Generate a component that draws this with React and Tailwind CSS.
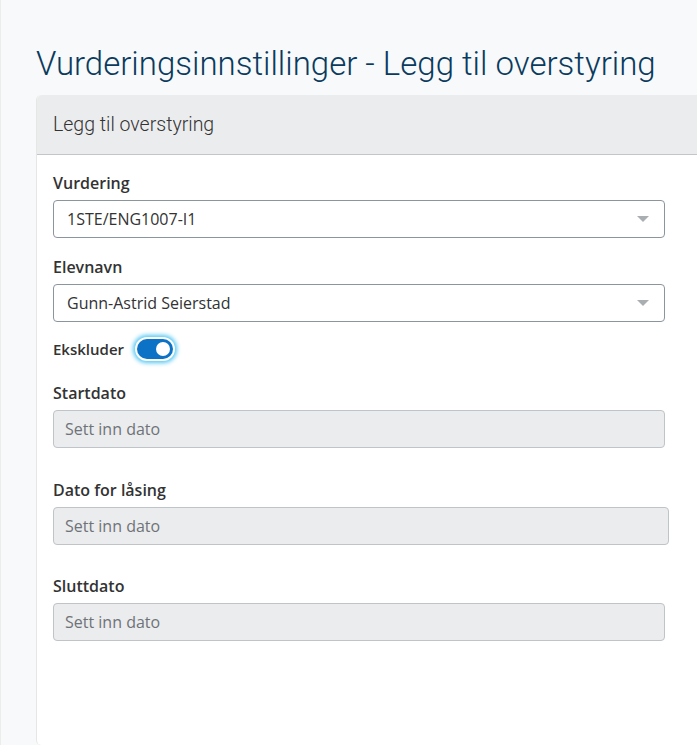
const labelCls = "block text-[16px] leading-[24px] font-semibold text-[#333] mb-[5px]";

function Select({ value }) {
  return (
    <div className="flex items-center justify-between h-[38px] w-[612px] rounded-[4px] border border-[#8a959e] bg-white pl-[13px] pr-[15px]">
      <span className="text-[16px] text-[#333]">{value}</span>
      <svg width="12" height="7" viewBox="0 0 12 7">
        <path d="M0 0h12L6 6z" fill="#a9aeb2" />
      </svg>
    </div>
  );
}

function DateInput({ wide }) {
  return (
    <div className={`flex items-center h-[38px] ${wide ? "w-[616px]" : "w-[612px]"} rounded-[4px] border border-[#bfc4c8] bg-[#ebecee] px-[11px]`}>
      <span className="text-[16px] text-[#6f7378]">Sett inn dato</span>
    </div>
  );
}

export default function App() {
  return (
    <div className="min-h-[745px] bg-[#f8f9fa] border-l border-[#ececec] pl-[35px] font-['Open_Sans',sans-serif] overflow-hidden">
      <h1 className="pt-[42px] pb-[9px] text-[33px] leading-[44px] font-light text-[#0a3b5e] font-['Roboto',sans-serif] whitespace-nowrap">
        Vurderingsinnstillinger - Legg til overstyring
      </h1>
      <div className="bg-white rounded-l-[5px] border-l border-[#e6e6e6] min-h-[650px]">
        <div className="h-[60px] flex items-center bg-[#ebecee] border-b border-[#c2c6ca] rounded-tl-[5px] pl-[16px]">
          <span className="text-[19.5px] font-light text-[#333] font-['Roboto',sans-serif]">Legg til overstyring</span>
        </div>
        <div className="pl-[16px] pt-[16px]">
          <label className={labelCls}>Vurdering</label>
          <Select value="1STE/ENG1007-I1" />
          <label className={`${labelCls} mt-[17px]`}>Elevnavn</label>
          <Select value="Gunn-Astrid Seierstad" />
          <div className="flex items-center gap-[13px] mt-[15px] h-[24px]">
            <span className="text-[15px] font-semibold text-[#333]">Ekskluder</span>
            <div className="w-[36px] h-[20px] rounded-full bg-[#0b72c6] ring-2 ring-white shadow-[0_0_4px_4px_#56c8f2] flex items-center justify-end pr-[3px]">
              <div className="w-[14px] h-[14px] rounded-full bg-white" />
            </div>
          </div>
          <label className={`${labelCls} mt-[20px]`}>Startdato</label>
          <DateInput />
          <label className={`${labelCls} mt-[30px]`}>Dato for låsing</label>
          <DateInput wide />
          <label className={`${labelCls} mt-[29px]`}>Sluttdato</label>
          <DateInput />
        </div>
      </div>
    </div>
  );
}
